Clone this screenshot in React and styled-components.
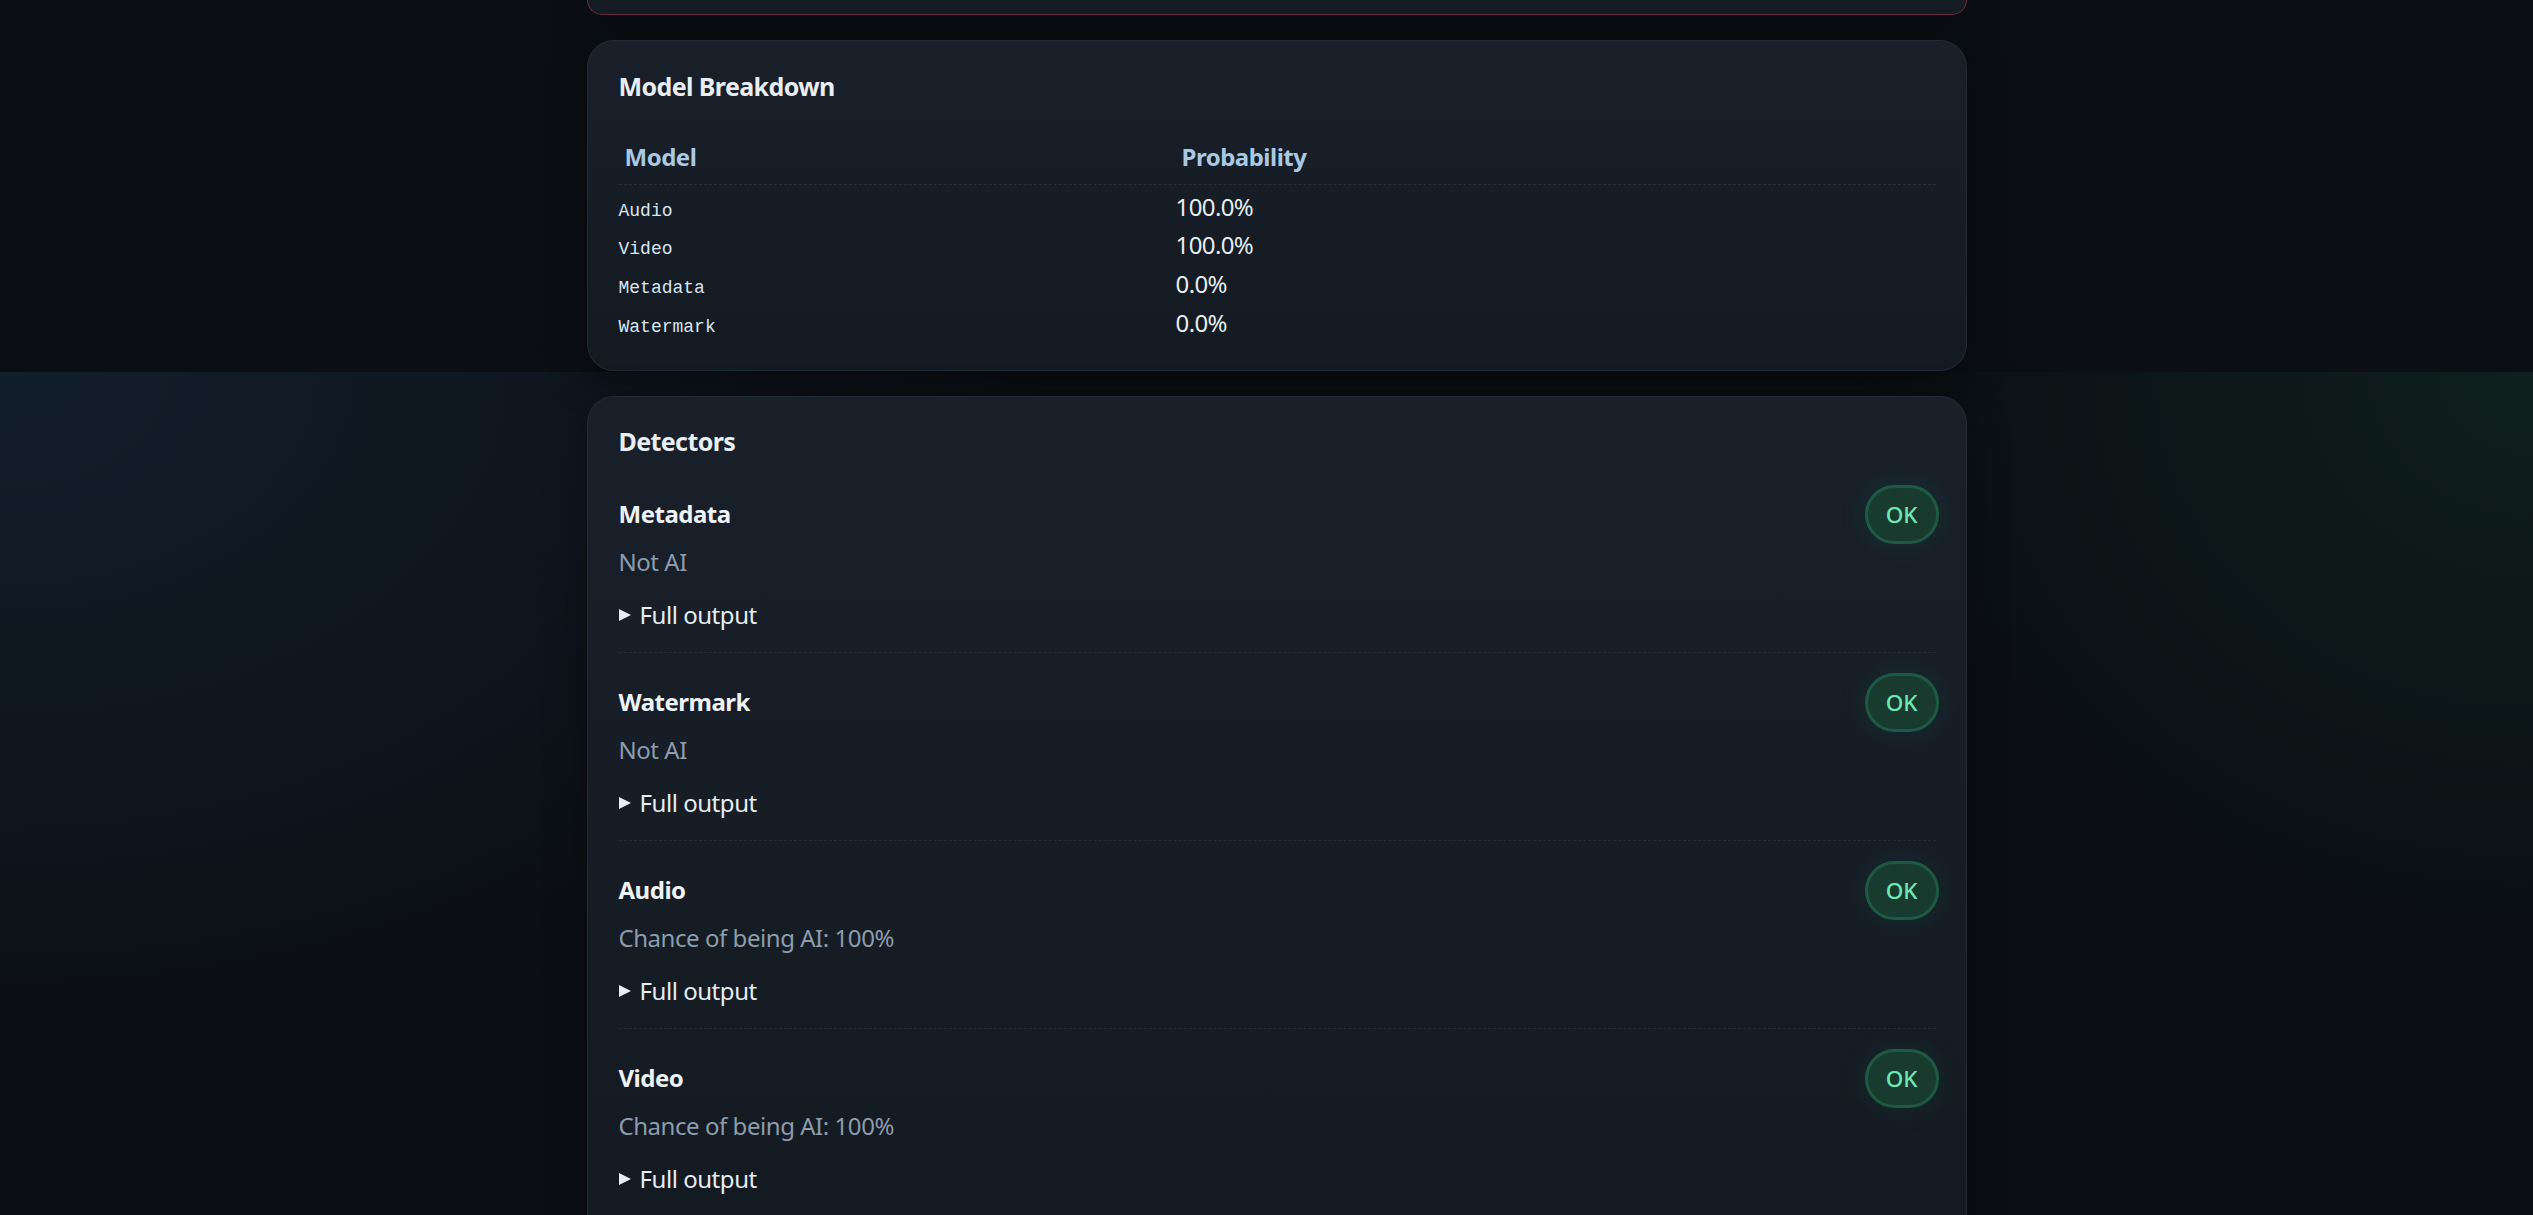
import React from "react";
import styled, { createGlobalStyle } from "styled-components";

const GlobalStyle = createGlobalStyle`
  html, body {
    margin: 0;
    padding: 0;
    height: 100%;
    overflow: hidden;
  }
  body {
    background-color: #0b0e13;
    background-image:
      radial-gradient(ellipse 1400px 950px at 0 0, rgba(30, 54, 78, 0.42), rgba(30, 54, 78, 0) 75%),
      radial-gradient(ellipse 900px 800px at 100% 0, rgba(22, 66, 46, 0.34), rgba(22, 66, 46, 0) 75%);
    background-position: 0 372px;
    background-size: 100% 1100px;
    background-repeat: no-repeat;
    font-family: "Noto Sans", "Open Sans", sans-serif;
    color: #e6edf3;
  }
`;

const Page = styled.main`
  padding-left: 21px;
`;

const Stack = styled.div`
  width: 1380px;
  margin: 0 auto;
  display: flex;
  flex-direction: column;
  gap: 25px;
`;

const Card = styled.section`
  box-sizing: border-box;
  background: linear-gradient(180deg, #19202a 0%, #141a21 100%);
  border: 1.5px solid ${(p) => (p.$tone === "danger" ? "#682b3d" : "#222c37")};
  border-radius: 27px;
  padding: 28.5px 30.5px 27.5px;
  box-shadow: 0 12px 40px rgba(0, 0, 0, 0.35);
`;

// the end of the previous card, scrolled almost out of view
const CardTail = styled(Card)`
  height: 15px;
  padding: 0;
  border-top: none;
  border-radius: 0 0 27px 27px;
  background: #161c23;
`;

const CardTitle = styled.h2`
  margin: 0 0 ${(p) => (p.$loose ? "25.5px" : "24px")};
  font-size: 25px;
  font-weight: 700;
  line-height: 1.35;
  letter-spacing: -0.6px;
  color: #e8eef4;
`;

const cols = "557px 1fr";

const HeadRow = styled.div`
  display: grid;
  grid-template-columns: ${cols};
  border-bottom: 1.5px dashed #262f3a;
`;

const HeadCell = styled.div`
  padding: 12px 6px 9px;
  font-size: 24px;
  font-weight: 700;
  line-height: 1.5;
  letter-spacing: -0.5px;
  color: #a9c9e3;
`;

const Rows = styled.div`
  padding-top: 2px;
`;

const Row = styled.div`
  display: grid;
  grid-template-columns: ${cols};
  align-items: baseline;
  padding: 1.4px 0;
`;

const ModelName = styled.span`
  font-family: "Liberation Mono", "DejaVu Sans Mono", monospace;
  font-size: 18px;
  color: #d8e6f3;
`;

const Prob = styled.span`
  font-size: 24px;
  line-height: 1.5;
  letter-spacing: -0.6px;
  color: #e6edf3;
`;

const DetectorList = styled.div`
  display: flex;
  flex-direction: column;
`;

const DetectorItem = styled.div`
  padding: 19.5px 0;
  border-bottom: 1.5px dashed #232c37;
  &:first-child {
    padding-top: 0;
  }
  &:last-child {
    border-bottom: none;
  }
`;

const ItemHead = styled.div`
  display: flex;
  align-items: center;
  justify-content: space-between;
  min-height: 59px;
`;

const DetectorName = styled.h3`
  margin: 0;
  font-size: 24px;
  font-weight: 700;
  line-height: 1.5;
  letter-spacing: -0.5px;
  color: #eef3f8;
`;

const StatusBadge = styled.span`
  display: inline-flex;
  align-items: center;
  justify-content: center;
  box-sizing: border-box;
  height: 59px;
  padding: 0 18px;
  margin-right: -3px;
  border-radius: 999px;
  border: 3px solid #1e5a43;
  background: #183a2f;
  color: #6ee7b7;
  font-size: 22.5px;
  font-weight: 500;
  box-shadow: 0 0 28px rgba(16, 185, 129, 0.12);
`;

const Verdict = styled.div`
  font-size: 24px;
  line-height: 1.5;
  letter-spacing: -0.45px;
  color: #8d9cad;
`;

const Output = styled.details`
  margin-top: 17px;
  font-size: 24px;
  line-height: 1.5;
  letter-spacing: -0.45px;
  color: #e6edf3;

  summary {
    list-style: none;
    cursor: pointer;
  }
  summary::-webkit-details-marker {
    display: none;
  }
  summary::before {
    content: "";
    display: inline-block;
    width: 0;
    height: 0;
    border-left: 12px solid #e6edf3;
    border-top: 6.5px solid transparent;
    border-bottom: 6.5px solid transparent;
    margin-right: 9px;
    vertical-align: 3px;
  }
  pre {
    font-family: "Liberation Mono", monospace;
    font-size: 16px;
    color: #9fb0c0;
  }
`;

const models = [
  { name: "Audio", p: "100.0%" },
  { name: "Video", p: "100.0%" },
  { name: "Metadata", p: "0.0%" },
  { name: "Watermark", p: "0.0%" },
];

const detectors = [
  { name: "Metadata", verdict: "Not AI", raw: '{ "ai": false }' },
  { name: "Watermark", verdict: "Not AI", raw: '{ "watermark": null }' },
  { name: "Audio", verdict: "Chance of being AI: 100%", raw: '{ "probability": 1.0 }' },
  { name: "Video", verdict: "Chance of being AI: 100%", raw: '{ "probability": 1.0 }' },
];

export default function App() {
  return (
    <>
      <GlobalStyle />
      <Page>
        <Stack>
          <CardTail $tone="danger" />

          <Card>
            <CardTitle>Model Breakdown</CardTitle>
            <HeadRow>
              <HeadCell>Model</HeadCell>
              <HeadCell>Probability</HeadCell>
            </HeadRow>
            <Rows>
              {models.map((m) => (
                <Row key={m.name}>
                  <ModelName>{m.name}</ModelName>
                  <Prob>{m.p}</Prob>
                </Row>
              ))}
            </Rows>
          </Card>

          <Card>
            <CardTitle $loose>Detectors</CardTitle>
            <DetectorList>
              {detectors.map((d) => (
                <DetectorItem key={d.name}>
                  <ItemHead>
                    <DetectorName>{d.name}</DetectorName>
                    <StatusBadge>OK</StatusBadge>
                  </ItemHead>
                  <Verdict>{d.verdict}</Verdict>
                  <Output>
                    <summary>Full output</summary>
                    <pre>{d.raw}</pre>
                  </Output>
                </DetectorItem>
              ))}
            </DetectorList>
          </Card>
        </Stack>
      </Page>
    </>
  );
}
